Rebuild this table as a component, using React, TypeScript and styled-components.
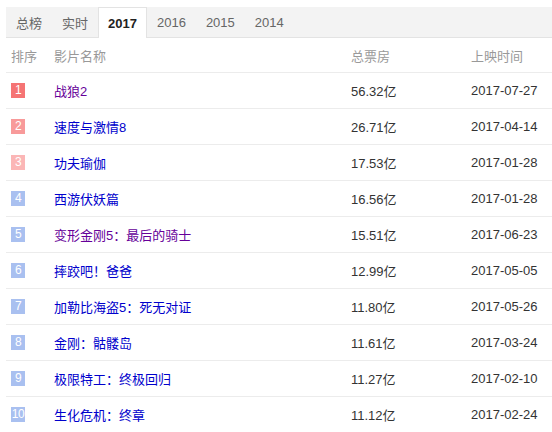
import React from "react";
import styled, { createGlobalStyle } from "styled-components";

const Global = createGlobalStyle`
  html, body { margin: 0; padding: 0; background: #fff; }
  body { font-family: Arial, "Liberation Sans", "Noto Sans CJK SC", sans-serif; font-size: 13px; }
`;

const Wrap = styled.div`
  padding: 7px 0 0 6px;
`;

const TabBar = styled.div`
  display: flex;
  height: 30px;
  background: #f3f3f3;
  border-bottom: 1px solid #e3e3e3;
`;

const Tab = styled.div<{ $active?: boolean }>`
  display: flex;
  align-items: center;
  box-sizing: border-box;
  height: ${(p) => (p.$active ? "31px" : "30px")};
  padding: 0 9px;
  font-size: 13px;
  color: ${(p) => (p.$active ? "#222" : "#666")};
  font-weight: ${(p) => (p.$active ? "bold" : "normal")};
  background: ${(p) => (p.$active ? "#fff" : "transparent")};
  border: 1px solid ${(p) => (p.$active ? "#e3e3e3" : "transparent")};
  border-bottom: none;
  margin-bottom: ${(p) => (p.$active ? "-1px" : "0")};
`;

const Grid = styled.div`
  display: grid;
  grid-template-columns: 48px 297px 120px 1fr;
`;

const Row = styled.div`
  display: contents;
`;

const Cell = styled.div<{ $head?: boolean }>`
  height: ${(p) => (p.$head ? "34px" : "35px")};
  border-bottom: 1px solid #ececec;
  display: flex;
  align-items: center;
  color: ${(p) => (p.$head ? "#999" : "#333")};
  font-size: 13px;
  white-space: nowrap;
`;

const RankCell = styled(Cell)`
  padding-left: 5px;
`;

const Badge = styled.span<{ $bg: string }>`
  display: inline-block;
  width: 14px;
  height: 15px;
  line-height: 15px;
  text-align: center;
  color: #fff;
  font-size: 12px;
  background: ${(p) => p.$bg};
  letter-spacing: -0.5px;
`;

const Title = styled.a<{ $visited?: boolean }>`
  color: ${(p) => (p.$visited ? "#660099" : "#0000cc")};
  text-decoration: none;
`;

const data = [
  ["战狼2", "56.32亿", "2017-07-27", true],
  ["速度与激情8", "26.71亿", "2017-04-14", false],
  ["功夫瑜伽", "17.53亿", "2017-01-28", false],
  ["西游伏妖篇", "16.56亿", "2017-01-28", false],
  ["变形金刚5：最后的骑士", "15.51亿", "2017-06-23", true],
  ["摔跤吧！爸爸", "12.99亿", "2017-05-05", false],
  ["加勒比海盗5：死无对证", "11.80亿", "2017-05-26", false],
  ["金刚：骷髅岛", "11.61亿", "2017-03-24", false],
  ["极限特工：终极回归", "11.27亿", "2017-02-10", false],
  ["生化危机：终章", "11.12亿", "2017-02-24", false],
] as const;

const badgeColor = (i: number) =>
  i === 0 ? "#f57474" : i === 1 ? "#f89a9a" : i === 2 ? "#fbb6b6" : "#a9c0f0";

export default function App() {
  const tabs = ["总榜", "实时", "2017", "2016", "2015", "2014"];
  return (
    <Wrap>
      <Global />
      <TabBar>
        {tabs.map((t) => (
          <Tab key={t} $active={t === "2017"}>
            {t}
          </Tab>
        ))}
      </TabBar>
      <Grid>
        <Row>
          <RankCell $head>排序</RankCell>
          <Cell $head>影片名称</Cell>
          <Cell $head>总票房</Cell>
          <Cell $head>上映时间</Cell>
        </Row>
        {data.map(([name, box, date, visited], i) => (
          <Row key={name}>
            <RankCell>
              <Badge $bg={badgeColor(i)}>{i + 1}</Badge>
            </RankCell>
            <Cell>
              <Title href="#" $visited={visited}>
                {name}
              </Title>
            </Cell>
            <Cell>{box}</Cell>
            <Cell>{date}</Cell>
          </Row>
        ))}
      </Grid>
    </Wrap>
  );
}
